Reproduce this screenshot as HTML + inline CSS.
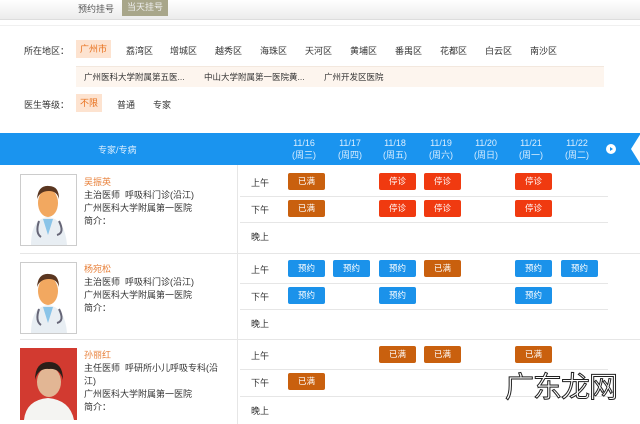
<!DOCTYPE html>
<html><head><meta charset="utf-8"><style>
*{margin:0;padding:0;box-sizing:border-box}
body{width:640px;height:424px;overflow:hidden;background:#fff;font-family:"Liberation Sans","Noto Sans CJK SC",sans-serif;font-size:9px;color:#333;position:relative}
.a{position:absolute;white-space:nowrap}
.b{position:absolute;width:37px;height:17px;border-radius:2px;color:#fff;text-align:center;line-height:17px;font-size:8.5px}
.m{background:#c9600e}.s{background:#f03a10}.y{background:#1b92ea}
.hl{background:#fde3d0;color:#e8701c;text-align:center;line-height:18px}
.ln{position:absolute;height:1px;background:#e6e6e6}
</style></head><body>
<div class="a" style="left:0;top:0;width:640px;height:20px;background:linear-gradient(#fff,#ececec);border-bottom:1px solid #ddd"></div>
<div class="a" style="left:78px;top:2px;color:#555">预约挂号</div>
<div class="a" style="left:122px;top:0;width:46px;height:16px;background:#a8a68a;color:#eee;text-align:center;line-height:15px">当天挂号</div>
<div class="ln" style="left:0;top:25px;width:640px;background:#f0f0f0"></div>

<div class="a" style="left:24px;top:44px">所在地区：</div>
<div class="a hl" style="left:76px;top:40px;width:35px;height:18px">广州市</div>
<div class="a" style="left:126px;top:44px">荔湾区</div>
<div class="a" style="left:170px;top:44px">增城区</div>
<div class="a" style="left:215px;top:44px">越秀区</div>
<div class="a" style="left:260px;top:44px">海珠区</div>
<div class="a" style="left:305px;top:44px">天河区</div>
<div class="a" style="left:350px;top:44px">黄埔区</div>
<div class="a" style="left:395px;top:44px">番禺区</div>
<div class="a" style="left:440px;top:44px">花都区</div>
<div class="a" style="left:485px;top:44px">白云区</div>
<div class="a" style="left:530px;top:44px">南沙区</div>
<div class="a" style="left:76px;top:66px;width:528px;height:21px;background:#fdf5ee;border-top:1px solid #f3e8de"></div>
<div class="a" style="left:84px;top:71px;font-size:8.5px">广州医科大学附属第五医...</div>
<div class="a" style="left:204px;top:71px;font-size:8.5px">中山大学附属第一医院黄...</div>
<div class="a" style="left:324px;top:71px;font-size:8.5px">广州开发区医院</div>
<div class="a" style="left:24px;top:98px">医生等级：</div>
<div class="a hl" style="left:76px;top:94px;width:26px;height:18px">不限</div>
<div class="a" style="left:117px;top:98px">普通</div>
<div class="a" style="left:153px;top:98px">专家</div>

<div class="a" style="left:0;top:133px;width:640px;height:32px;background:#1a94ef"></div>
<div class="a" style="left:631px;top:133px;width:0;height:0;border-top:16px solid transparent;border-bottom:16px solid transparent;border-right:10px solid #fff"></div>
<div class="a" style="left:98px;top:143px;color:#dbeefe">专家/专病</div>
<div class="a" style="left:292px;top:137px;color:#dbeefe;text-align:center;line-height:12px">11/16<br>(周三)</div>
<div class="a" style="left:338px;top:137px;color:#dbeefe;text-align:center;line-height:12px">11/17<br>(周四)</div>
<div class="a" style="left:383px;top:137px;color:#dbeefe;text-align:center;line-height:12px">11/18<br>(周五)</div>
<div class="a" style="left:429px;top:137px;color:#dbeefe;text-align:center;line-height:12px">11/19<br>(周六)</div>
<div class="a" style="left:474px;top:137px;color:#dbeefe;text-align:center;line-height:12px">11/20<br>(周日)</div>
<div class="a" style="left:519px;top:137px;color:#dbeefe;text-align:center;line-height:12px">11/21<br>(周一)</div>
<div class="a" style="left:565px;top:137px;color:#dbeefe;text-align:center;line-height:12px">11/22<br>(周二)</div>
<div class="a" style="left:606px;top:144px;width:10px;height:10px;border-radius:50%;background:#fff"></div>
<div class="a" style="left:610px;top:146.5px;width:0;height:0;border-top:2.5px solid transparent;border-bottom:2.5px solid transparent;border-left:3.5px solid #1a94ef"></div>

<div class="a" style="left:237px;top:165px;width:1px;height:259px;background:#e6e6e6"></div>
<div class="ln" style="left:240px;top:196px;width:368px"></div>
<div class="ln" style="left:240px;top:222px;width:368px"></div>
<div class="ln" style="left:20px;top:253px;width:620px"></div>
<div class="ln" style="left:240px;top:283px;width:368px"></div>
<div class="ln" style="left:240px;top:309px;width:368px"></div>
<div class="ln" style="left:20px;top:339px;width:620px"></div>
<div class="ln" style="left:240px;top:369px;width:368px"></div>
<div class="ln" style="left:240px;top:396px;width:368px"></div>

<div class="a" style="left:20px;top:174px;width:57px;height:72px;border:1px solid #ccc;background:#fff"><svg width="55" height="70"><path d="M10 70 Q10 44 27 42 Q44 44 46 70Z" fill="#e8eef3"/><path d="M22 44 L27 60 L32 44Z" fill="#8ac4e8"/><ellipse cx="27" cy="28" rx="10" ry="14" fill="#f2a860"/><path d="M16 24 Q17 10 28 11 Q38 11 38 24 Q36 16 28 16 Q19 16 16 24Z" fill="#5a3620"/><path d="M18 46 Q14 58 20 62 M38 46 Q44 58 36 60" stroke="#667" stroke-width="2" fill="none"/></svg></div>
<div class="a" style="left:20px;top:262px;width:57px;height:72px;border:1px solid #ccc;background:#fff"><svg width="55" height="70"><path d="M10 70 Q10 44 27 42 Q44 44 46 70Z" fill="#e8eef3"/><path d="M22 44 L27 60 L32 44Z" fill="#8ac4e8"/><ellipse cx="27" cy="28" rx="10" ry="14" fill="#f2a860"/><path d="M16 24 Q17 10 28 11 Q38 11 38 24 Q36 16 28 16 Q19 16 16 24Z" fill="#5a3620"/><path d="M18 46 Q14 58 20 62 M38 46 Q44 58 36 60" stroke="#667" stroke-width="2" fill="none"/></svg></div>
<div class="a" style="left:20px;top:348px;width:57px;height:72px;background:#d23a30"><svg width="57" height="72"><path d="M4 72 Q6 52 28 50 Q50 52 54 72Z" fill="#f4f4f2"/><ellipse cx="29" cy="34" rx="12" ry="15" fill="#e2b694"/><path d="M15 32 Q15 14 29 14 Q43 14 43 32 Q40 20 29 21 Q18 20 15 32Z" fill="#2a1e18"/></svg></div>

<div class="a" style="left:84px;top:175px;color:#e8803a">吴振英</div>
<div class="a" style="left:84px;top:188px">主治医师&nbsp; 呼吸科门诊(沿江)</div>
<div class="a" style="left:84px;top:201px">广州医科大学附属第一医院</div>
<div class="a" style="left:84px;top:214px">简介：</div>
<div class="a" style="left:84px;top:262px;color:#e8803a">杨宛松</div>
<div class="a" style="left:84px;top:275px">主治医师&nbsp; 呼吸科门诊(沿江)</div>
<div class="a" style="left:84px;top:288px">广州医科大学附属第一医院</div>
<div class="a" style="left:84px;top:301px">简介：</div>
<div class="a" style="left:84px;top:348px;color:#e8803a">孙丽红</div>
<div class="a" style="left:84px;top:361px">主任医师&nbsp; 呼研所小儿呼吸专科(沿</div>
<div class="a" style="left:84px;top:374px">江)</div>
<div class="a" style="left:84px;top:387px">广州医科大学附属第一医院</div>
<div class="a" style="left:84px;top:400px">简介：</div>

<div class="a" style="left:251px;top:176px">上午</div><div class="a" style="left:251px;top:203px">下午</div><div class="a" style="left:251px;top:230px">晚上</div>
<div class="a" style="left:251px;top:263px">上午</div><div class="a" style="left:251px;top:290px">下午</div><div class="a" style="left:251px;top:317px">晚上</div>
<div class="a" style="left:251px;top:349px">上午</div><div class="a" style="left:251px;top:376px">下午</div><div class="a" style="left:251px;top:404px">晚上</div>

<div class="b m" style="left:288px;top:173px">已满</div>
<div class="b s" style="left:379px;top:173px">停诊</div>
<div class="b s" style="left:424px;top:173px">停诊</div>
<div class="b s" style="left:515px;top:173px">停诊</div>
<div class="b m" style="left:288px;top:200px">已满</div>
<div class="b s" style="left:379px;top:200px">停诊</div>
<div class="b s" style="left:424px;top:200px">停诊</div>
<div class="b s" style="left:515px;top:200px">停诊</div>

<div class="b y" style="left:288px;top:260px">预约</div>
<div class="b y" style="left:333px;top:260px">预约</div>
<div class="b y" style="left:379px;top:260px">预约</div>
<div class="b m" style="left:424px;top:260px">已满</div>
<div class="b y" style="left:515px;top:260px">预约</div>
<div class="b y" style="left:561px;top:260px">预约</div>
<div class="b y" style="left:288px;top:287px">预约</div>
<div class="b y" style="left:379px;top:287px">预约</div>
<div class="b y" style="left:515px;top:287px">预约</div>

<div class="b m" style="left:379px;top:346px">已满</div>
<div class="b m" style="left:424px;top:346px">已满</div>
<div class="b m" style="left:515px;top:346px">已满</div>
<div class="b m" style="left:288px;top:373px">已满</div>

<div class="a" style="left:505px;top:364px;font-size:29px;color:#fff;-webkit-text-stroke:1px #222;letter-spacing:-1px">广东龙网</div>
</body></html>
